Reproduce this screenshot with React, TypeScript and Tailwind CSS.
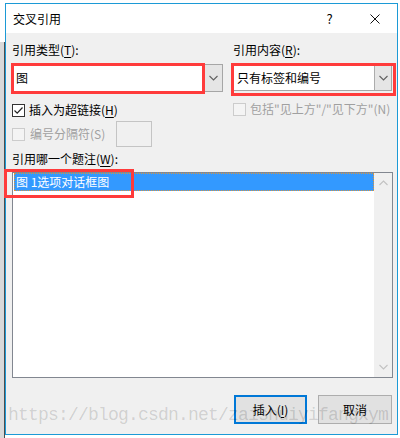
import type { ReactNode } from 'react'

function Chevron({ up = false, color = '#606060' }: { up?: boolean; color?: string }) {
  return (
    <svg width="9" height="6" viewBox="0 0 9 6" className={up ? 'rotate-180' : ''}>
      <path d="M0.5 1 L4.5 5 L8.5 1" fill="none" stroke={color} strokeWidth="1.1" />
    </svg>
  )
}

function Mn({ children }: { children: ReactNode }) {
  return <span className="underline underline-offset-2">{children}</span>
}

function CheckBox({ checked = false, disabled = false }: { checked?: boolean; disabled?: boolean }) {
  return (
    <span
      className={
        disabled
          ? 'flex h-[13px] w-[13px] shrink-0 border border-[#cccccc] bg-[#f4f4f4]'
          : 'flex h-[13px] w-[13px] shrink-0 items-center justify-center border border-[#333333] bg-white'
      }
    >
      {checked && (
        <svg width="11" height="11" viewBox="0 0 11 11">
          <path d="M1.5 5.5 L4.2 8.2 L9.5 2.5" fill="none" stroke="#222" strokeWidth="1.2" />
        </svg>
      )}
    </span>
  )
}

export default function App() {
  return (
    <div className="relative flex h-[438px] w-[400px] overflow-hidden bg-white font-['Noto_Sans_CJK_SC',sans-serif] text-[12px] leading-[16px] text-black">
      {/* window behind the dialog */}
      <div className="flex w-[5px] flex-col">
        <div className="h-[42px] bg-white" />
        <div className="flex-1 border-r border-[#4d4d4d] bg-[#d9d9d9]" />
      </div>

      <div className="mt-[3px] flex h-[432px] w-[393px] flex-col border border-[#1c9ad6]">
        {/* title bar */}
        <div className="flex h-[29px] items-center bg-white">
          <span className="flex-1 pl-[7px] text-[12px]">交叉引用</span>
          <span className="flex w-[45px] justify-center text-[13px]">?</span>
          <span className="flex w-[45px] justify-center">
            <svg width="10" height="10" viewBox="0 0 10 10">
              <path d="M0.5 0.5 L9.5 9.5 M9.5 0.5 L0.5 9.5" stroke="#111" strokeWidth="1" />
            </svg>
          </span>
        </div>

        {/* body */}
        <div className="flex flex-1 flex-col bg-[#f0f0f0] pl-[6px] pr-[4px] pt-[9px]">
          <div className="flex gap-[10px]">
            {/* left column */}
            <div className="flex w-[211px] flex-col">
              <span>
                引用类型(<Mn>T</Mn>):
              </span>
              <div className="relative mt-[6px] flex h-[28px] border border-[#a6a6a6] bg-white">
                <span className="flex flex-1 items-center pl-[3px]">图</span>
                <span className="flex w-[18px] items-center justify-center border-l border-[#acacac] bg-[#e5e5e5]">
                  <Chevron />
                </span>
                <div className="absolute -left-[2px] -top-[2px] h-[31px] w-[194px] border-[3px] border-[#ff3b3b]" />
              </div>
              <label className="mt-[10px] flex items-center gap-[4px]">
                <CheckBox checked />
                <span>
                  插入为超链接(<Mn>H</Mn>)
                </span>
              </label>
              <div className="mt-[3px] flex h-[26px] items-center">
                <div className="flex w-[104px] items-center gap-[5px] text-[#a0a0a0]">
                  <CheckBox disabled />
                  <span>编号分隔符(S)</span>
                </div>
                <div className="h-[26px] w-[36px] border border-[#c4c4c4] bg-[#f0f0f0]" />
              </div>
            </div>

            {/* right column */}
            <div className="flex w-[159px] flex-col">
              <span>
                引用内容(<Mn>R</Mn>):
              </span>
              <div className="relative mt-[7px] flex h-[26px] border border-[#a6a6a6] bg-white">
                <span className="flex flex-1 items-center pl-[3px]">只有标签和编号</span>
                <span className="flex w-[17px] items-center justify-center border-l border-[#acacac] bg-[#e5e5e5]">
                  <Chevron />
                </span>
                <div className="absolute -left-[3px] -top-[3px] h-[33px] w-[165px] border-[3px] border-[#ff3b3b]" />
              </div>
              <label className="mt-[10px] flex items-center gap-[4px] whitespace-nowrap text-[#a0a0a0]">
                <CheckBox disabled />
                <span>包括"见上方"/"见下方"(N)</span>
              </label>
            </div>
          </div>

          <span className="mt-[4px]">
            引用哪一个题注(<Mn>W</Mn>):
          </span>

          {/* caption list */}
          <div className="mt-[5px] flex h-[206px] border border-[#828790] bg-white">
            <div className="flex-1 pl-[1px]">
              <div className="relative flex h-[18px] items-center whitespace-pre border border-dotted border-[#d9953f] bg-[#3399ff] pl-[1px] text-white">
                图 1选项对话框图
                <div className="absolute -left-[11px] -top-[5px] h-[29px] w-[130px] border-[3px] border-[#ff3b3b]" />
              </div>
            </div>
            <div className="flex w-[18px] flex-col items-center justify-between bg-[#f0f0f0] py-[7px]">
              <Chevron up color="#c2c2c2" />
              <Chevron color="#c2c2c2" />
            </div>
          </div>

          {/* buttons */}
          <div className="mr-[1px] mt-[17px] flex justify-end gap-[11px]">
            <button className="flex h-[29px] w-[73px] items-center justify-center border-2 border-[#0078d7] bg-[#e1e1e1]">
              插入(<Mn>I</Mn>)
            </button>
            <button className="flex h-[29px] w-[74px] items-center justify-center border border-[#adadad] bg-[#e1e1e1]">
              取消
            </button>
          </div>
        </div>
      </div>

      {/* watermark */}
      <span className="pointer-events-none absolute left-[8px] top-[404px] font-['Liberation_Mono',monospace] text-[18px] leading-[22px] tracking-[-0.8px] text-black/15">
        https://blog.csdn.net/zaishuiyifangxym
      </span>
    </div>
  )
}
